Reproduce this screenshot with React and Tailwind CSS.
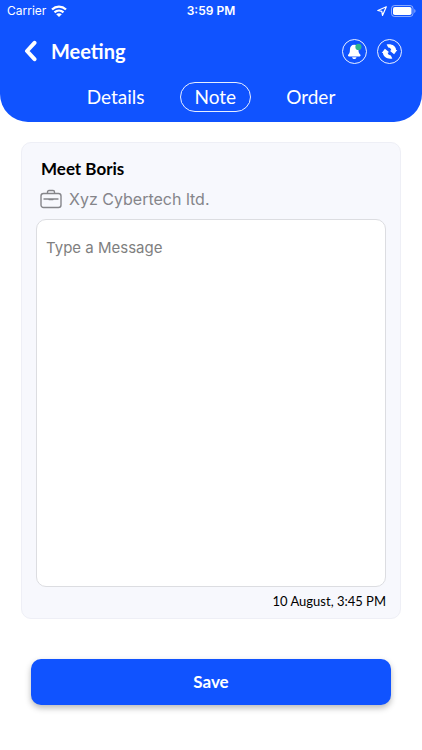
import React from 'react';

function WifiIcon() {
  return (
    <svg width="16" height="12" viewBox="0 0 16 12" fill="none" stroke="white" strokeWidth="2.3" aria-hidden="true">
      <path d="M1 4.5C5 .7 11 .7 15 4.5" />
      <path d="M3.5 7.4c2.6-2.4 6.4-2.4 9 0" />
      <path d="M8 12 5.2 9.3c1.6-1.4 4-1.4 5.6 0Z" fill="white" stroke="none" />
    </svg>
  );
}

function LocationIcon() {
  return (
    <svg width="10" height="10" viewBox="0 0 10 10" fill="none" stroke="white" strokeWidth="1.2" strokeLinejoin="round" aria-hidden="true">
      <path d="M9.3 .8 .8 4.5l4 .9 .7 4Z" />
    </svg>
  );
}

function BatteryIcon() {
  return (
    <svg width="25" height="12" viewBox="0 0 25 12" fill="none" aria-hidden="true">
      <rect x=".5" y=".5" width="21.5" height="11" rx="3" stroke="white" strokeOpacity=".5" />
      <rect x="2" y="2" width="18.5" height="8" rx="1.8" fill="white" />
      <path d="M23.3 4v4c1.6-.7 1.6-3.3 0-4Z" fill="white" fillOpacity=".55" />
    </svg>
  );
}

function BellIcon() {
  return (
    <svg width="17" height="17" viewBox="0 0 16 16" aria-hidden="true">
      <path fill="white" d="M7.7 1.6C5 1.6 3.7 3.6 3.7 6.1c0 2.8-.5 3.7-1.5 4.7-.7.7-.3 1.9.7 1.9h9.8c1 0 1.4-1.2.7-1.9-1-1-1.700-1.900-1.700-4.700 0-2.500-1.300-4.500-4-4.500Z" />
      <path fill="white" d="M5.8 13.3h4c0 1-.9 1.7-2 1.7s-2-.7-2-1.7Z" />
      <circle cx="11.700" cy="3.700" r="2.900" fill="#2fb58c" />
    </svg>
  );
}

function SyncIcon() {
  return (
    <svg width="17" height="17" viewBox="0 0 16 16" fill="white" aria-hidden="true">
      <path d="M5.300 1.500C9.800 .5 13.800 2.700 14.200 6.500L15.300 6.700 12.300 10.600 8.300 7.400 9.600 7C9.700 5.400 8.600 4.500 6.800 4.300Z" />
      <path d="M10.700 14.500C6.200 15.500 2.200 13.300 1.800 9.500L.7 9.300 3.700 5.400 7.700 8.600 6.400 9C6.300 10.600 7.400 11.500 9.200 11.700Z" />
    </svg>
  );
}

function BriefcaseIcon() {
  return (
    <svg width="22" height="20" viewBox="0 0 22 20" fill="none" stroke="#85858a" strokeWidth="1.4" strokeLinecap="round" strokeLinejoin="round" aria-hidden="true">
      <rect x="1" y="4.5" width="20" height="14" rx="2.5" />
      <path d="M7.5 4V3c0-.9.6-1.5 1.5-1.5h4c.9 0 1.5.6 1.5 1.5v1" />
      <path d="M4 10h14M9 10.5h4" />
    </svg>
  );
}

const tabs = ['Details', 'Note', 'Order'];

export default function App() {
  return (
    <div className="min-h-screen bg-white font-['Lato',sans-serif] text-black">
      <header className="rounded-b-[28px] bg-[#1053ff] pb-[10px] text-white">
        <div className="grid h-[22px] grid-cols-3 items-center px-[6px] font-['Inter',sans-serif] text-[12px] leading-4">
          <div className="flex items-center gap-[5px] pl-px">
            <span>Carrier</span>
            <WifiIcon />
          </div>
          <span className="text-center font-semibold">3:59 PM</span>
          <div className="flex items-center justify-end gap-1">
            <LocationIcon />
            <BatteryIcon />
          </div>
        </div>

        <div className="flex h-[58px] items-center pr-5 pl-6">
          <button type="button" aria-label="Back" className="mr-[14px]">
            <svg width="13" height="22" viewBox="0 0 13 22" fill="none" stroke="white" strokeWidth="4" strokeLinecap="round" strokeLinejoin="round" aria-hidden="true">
              <path d="m10.5 2.8-7.5 8.2 7.5 8.2" />
            </svg>
          </button>
          <h1 className="text-[20px] leading-6 font-bold">Meeting</h1>
          <div className="ml-auto flex gap-[10px]">
            <button type="button" aria-label="Notifications" className="flex size-[25px] items-center justify-center rounded-full border border-white/90">
              <BellIcon />
            </button>
            <button type="button" aria-label="Sync" className="flex size-[25px] items-center justify-center rounded-full border border-white/90">
              <SyncIcon />
            </button>
          </div>
        </div>

        <nav className="flex justify-center gap-5 pt-[2px]">
          {tabs.map((tab) => (
            <button
              key={tab}
              type="button"
              className={
                tab === 'Note'
                  ? 'h-[30px] rounded-full border border-white/90 px-[14px] text-[19px] leading-7'
                  : 'h-[30px] rounded-full border border-transparent px-[14px] text-[19px] leading-7'
              }
            >
              {tab}
            </button>
          ))}
        </nav>
      </header>

      <main className="px-[21px] pt-5 pb-11">
        <section className="rounded-[10px] border border-[#eeeff6] bg-[#f7f8fd] px-[14px] pt-[14px] pb-[7px]">
          <h2 className="px-[5px] text-[17px] leading-6 font-bold">Meet Boris</h2>
          <div className="mt-[6px] flex h-6 items-center gap-[7px] px-1 font-['Inter',sans-serif] text-[16px] leading-6 text-[#85858a]">
            <BriefcaseIcon />
            <span>Xyz Cybertech ltd.</span>
          </div>
          <textarea
            aria-label="Message"
            placeholder="Type a Message"
            className="mt-2 block h-[368px] w-full resize-none rounded-[10px] border border-[#dcdde1] bg-white px-[9px] py-4 font-['Inter',sans-serif] text-[15px] leading-6 placeholder:text-[#7f7f7f]"
          />
          <p className="mt-1 text-right text-[13px] leading-5">10 August, 3:45 PM</p>
        </section>

        <div className="px-[10px] pt-10">
          <button type="button" className="h-[46px] w-full rounded-[10px] bg-[#1053ff] text-[17px] leading-6 font-bold text-white shadow-[0_3px_6px_rgba(0,0,0,0.28)]">
            Save
          </button>
        </div>
      </main>
    </div>
  );
}
